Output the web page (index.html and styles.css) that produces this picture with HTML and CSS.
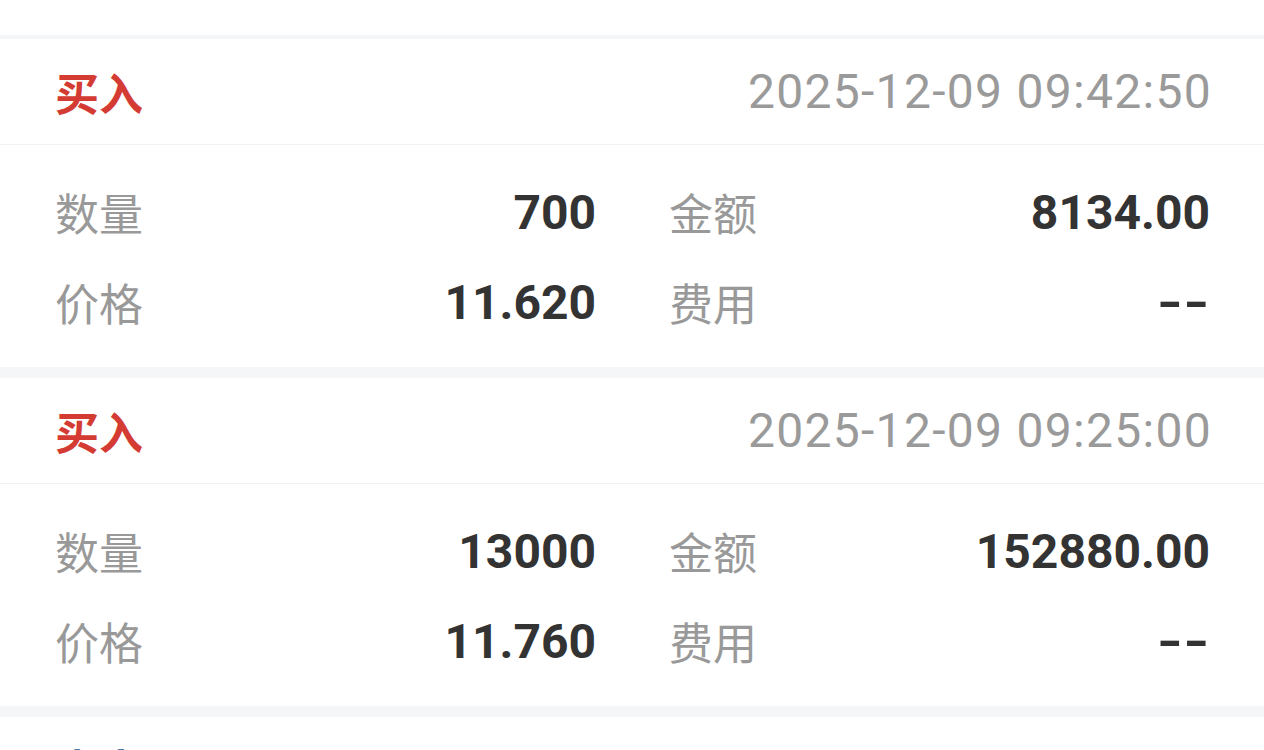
FILE: index.html
```html
<!DOCTYPE html>
<html lang="zh-CN">
<head>
    <meta charset="UTF-8">
    <meta name="viewport" content="width=device-width, initial-scale=1.0">
    <title>成交记录</title>
    <link rel="stylesheet" href="styles.css">
</head>
<body>

    <div class="top-space"></div>

    <div class="records">
        <div class="record">
            <div class="record-head">
                <span class="side buy">买入</span>
                <span class="time">2025-12-09 09:42:50</span>
            </div>
            <div class="record-body">
                <div class="cell"><span class="label">数量</span><span class="value">700</span></div>
                <div class="cell"><span class="label">金额</span><span class="value">8134.00</span></div>
                <div class="cell"><span class="label">价格</span><span class="value">11.620</span></div>
                <div class="cell"><span class="label">费用</span><span class="value dash">--</span></div>
            </div>
        </div>

        <div class="record">
            <div class="record-head">
                <span class="side buy">买入</span>
                <span class="time">2025-12-09 09:25:00</span>
            </div>
            <div class="record-body">
                <div class="cell"><span class="label">数量</span><span class="value">13000</span></div>
                <div class="cell"><span class="label">金额</span><span class="value">152880.00</span></div>
                <div class="cell"><span class="label">价格</span><span class="value">11.760</span></div>
                <div class="cell"><span class="label">费用</span><span class="value dash">--</span></div>
            </div>
        </div>

        <div class="record">
            <div class="record-head">
                <span class="side sell">卖出</span>
            </div>
        </div>
    </div>

</body>
</html>
```

FILE: styles.css
```css
body {
    margin: 0;
    background-color: #ffffff;
    font-family: Roboto, "Noto Sans CJK SC", sans-serif;
    overflow: hidden;
}
.top-space {
    height: 35px;
    background-color: #fff;
}
.records {
    display: flex;
    flex-direction: column;
    gap: 11px;
    padding-top: 4px;
    background-color: #f5f6f8;
}
.record {
    background-color: #fff;
}
.record-head {
    height: 105px;
    display: flex;
    justify-content: space-between;
    align-items: center;
    padding: 0 54px 0 55px;
    border-bottom: 1px solid #f3f3f3;
}
.side {
    font-family: "Noto Sans CJK SC", sans-serif;
    font-size: 44px;
    font-weight: bold;
}
.buy {
    color: #d43c33;
}
.sell {
    color: #4f7aa6;
    margin-top: -4px;
}
.time {
    font-size: 48px;
    letter-spacing: 1.3px;
    margin-right: -2px;
    color: #9a9a9a;
}
.record-body {
    display: grid;
    grid-template-columns: 1fr 1fr;
    column-gap: 73px;
    padding: 22px 54px 20px 55px;
}
.cell {
    height: 90px;
    display: flex;
    justify-content: space-between;
    align-items: center;
}
.label {
    font-family: "Noto Sans CJK SC", sans-serif;
    font-size: 44px;
    color: #999;
}
.value {
    font-size: 48px;
    font-weight: bold;
    color: #333;
}
.dash {
    display: inline-block;
    transform: scaleX(1.4);
    transform-origin: right center;
}
```
